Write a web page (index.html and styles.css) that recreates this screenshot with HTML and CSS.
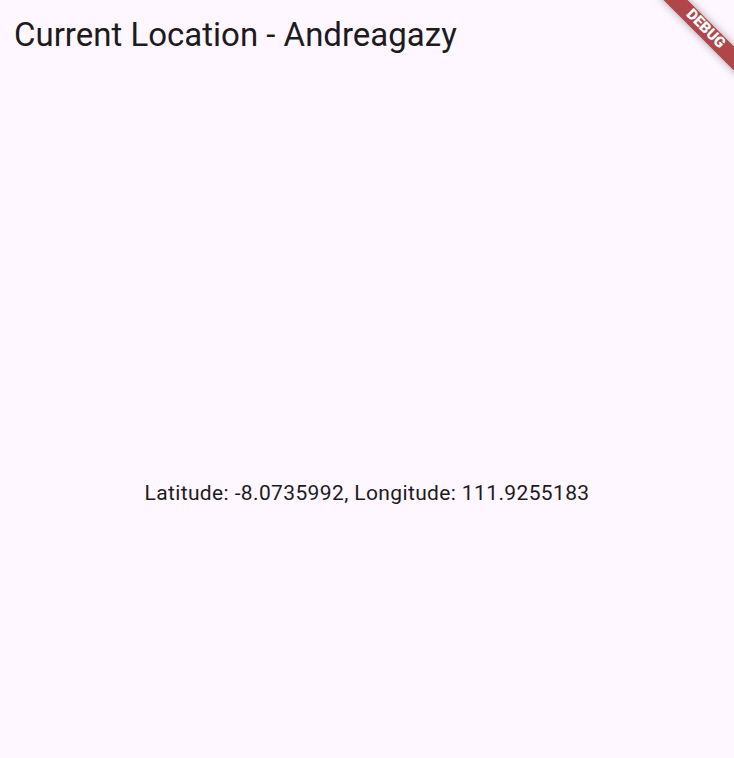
FILE: index.html
```html
<!DOCTYPE html>
<html>
<head>
<meta charset="utf-8">
<link rel="stylesheet" href="styles.css">
</head>
<body>
<div class="app">
  <header class="appbar"><h1 class="title">Current Location - Andreagazy</h1></header>
  <main class="content">
    <p class="coords">Latitude: -8.0735992, Longitude: 111.9255183</p>
  </main>
</div>
<div class="banner">DEBUG</div>
</body>
</html>
```
FILE: styles.css
```css
html, body {
  margin: 0;
  padding: 0;
  width: 734px;
  height: 758px;
  overflow: hidden;
  background: #fef7ff;
  font-family: Roboto, "Noto Sans", sans-serif;
  color: #1d1b20;
}
.app {
  display: flex;
  flex-direction: column;
  height: 758px;
}
.appbar {
  padding: 13.5px 14px 0;
  flex: none;
}
.title {
  margin: 0;
  font-size: 33px;
  font-weight: 400;
  line-height: 42px;
}
.content {
  display: flex;
  flex-direction: column;
  align-items: center;
  padding-top: 422px;
}
.coords {
  margin: 0;
  font-size: 21px;
  line-height: 30px;
  letter-spacing: 0.375px;
}
.banner {
  position: absolute;
  left: 649.7px;
  top: 20.8px;
  width: 110px;
  height: 17px;
  transform: rotate(45deg);
  background: rgb(176, 70, 74);
  box-shadow: 0 0 9px rgba(0, 0, 0, 0.35);
  color: #fff;
  font-size: 15px;
  font-weight: 900;
  line-height: 15px;
  text-align: center;
  font-family: Roboto, sans-serif;
}
```
